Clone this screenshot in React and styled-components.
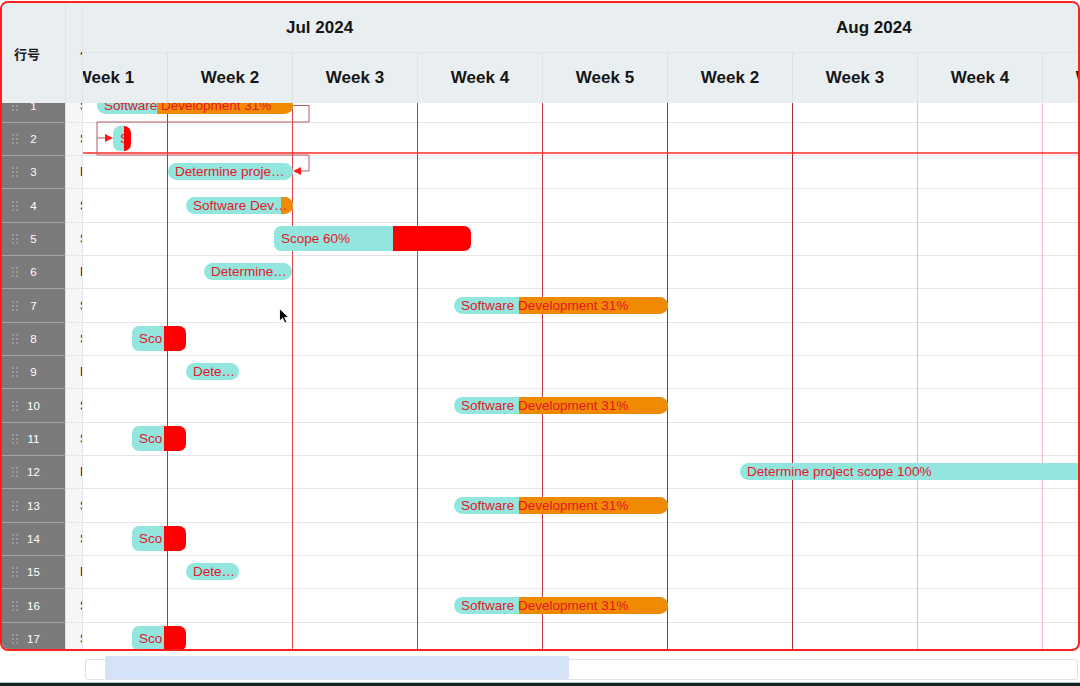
import React from 'react';
import styled, { createGlobalStyle } from 'styled-components';

// page x of the gantt panel's left edge; bars below are given in page x
const GANTT_LEFT = 83;
const TIMELINE_SHIFT = -40;

const weeks = [
  { label: 'Week 1', line: '#b4343c' },
  { label: 'Week 2', line: '#e0434b' },
  { label: 'Week 3', line: '#b8393f' },
  { label: 'Week 4', line: '#bb3a42' },
  { label: 'Week 5', line: '#a8313a' },
  { label: 'Week 2', line: '#a5303a' },
  { label: 'Week 3', line: '#f3b4b8' },
  { label: 'Week 4', line: '#f4bcc0' },
  { label: 'Week 5', line: '#f4bcc0' },
];

const DEV = 'Software Development';
const SCOPE = 'Scope';
const DET = 'Determine project scope';

const dev = (x1, x2, split) => ({ kind: 'dev', x1, x2, split, label: 'Software Development 31%' });
const scope = (x1, x2, split) => ({ kind: 'scope', x1, x2, split, label: 'Scope 60%' });
const plain = (x1, x2) => ({ kind: 'plain', x1, x2, label: 'Determine project scope 100%' });

const rows = [
  { name: DEV, bar: dev(97, 293, 157) },
  { name: SCOPE, bar: scope(113, 131, 124) },
  { name: DET, bar: plain(168, 293) },
  { name: DEV, bar: dev(186, 293, 281) },
  { name: SCOPE, bar: scope(274, 471, 393) },
  { name: DET, bar: plain(204, 292) },
  { name: DEV, bar: dev(454, 668, 519) },
  { name: SCOPE, bar: scope(132, 186, 164) },
  { name: DET, bar: plain(186, 239) },
  { name: DEV, bar: dev(454, 668, 519) },
  { name: SCOPE, bar: scope(132, 186, 164) },
  { name: DET, bar: plain(740, 1200) },
  { name: DEV, bar: dev(454, 668, 519) },
  { name: SCOPE, bar: scope(132, 186, 164) },
  { name: DET, bar: plain(186, 239) },
  { name: DEV, bar: dev(454, 668, 519) },
  { name: SCOPE, bar: scope(132, 186, 164) },
];

const GlobalStyle = createGlobalStyle`
  * { box-sizing: border-box; }
  body {
    margin: 0;
    background: #fff;
    font-family: "Liberation Sans", Arial, "Noto Sans CJK SC", sans-serif;
  }
`;

const Page = styled.div`
  position: relative;
  width: 1080px;
  height: 686px;
  overflow: hidden;
  background: #fff;
  display: flex;
  flex-direction: column;
`;

const Frame = styled.div`
  margin-top: 1px;
  width: 1080px;
  height: 650px;
  border: 2px solid #ff1f1f;
  border-radius: 8px;
  overflow: hidden;
  display: flex;
`;

const TableSide = styled.div`
  width: 81px;
  flex-shrink: 0;
  display: flex;
  flex-direction: column;
  border-right: 1px solid #e2e6ea;
`;

const TableHead = styled.div`
  height: 100px;
  display: flex;
  background: #e9eef1;
`;

const HeadCell = styled.div`
  width: ${p => p.$w}px;
  display: flex;
  align-items: center;
  padding-left: ${p => p.$pad}px;
  font-size: 13px;
  font-weight: ${p => (p.$bold ? 700 : 400)};
  color: #1c1c1c;
  white-space: nowrap;
  overflow: hidden;
  border-right: ${p => (p.$divider ? '1px solid #dde2e6' : 'none')};
`;

const TableBody = styled.div`
  flex: 1;
  overflow: hidden;
`;

const Rows = styled.div`
  margin-top: -13.5px;
`;

const TableRow = styled.div`
  height: 33.33px;
  display: flex;
`;

const IndexCell = styled.div`
  position: relative;
  width: 65px;
  display: flex;
  align-items: center;
  justify-content: center;
  background: #7b7b7b;
  border-bottom: 1px solid #a3a3a3;
  border-right: 1px solid #e0e0e0;
  color: #fff;
  font-size: 11.5px;
`;

const Handle = styled.svg`
  position: absolute;
  left: 9px;
  top: 50%;
  margin-top: -6px;
`;

const NameCell = styled.div`
  width: 16px;
  display: flex;
  align-items: center;
  padding-left: 14px;
  background: #f4f6f8;
  border-bottom: 1px solid #e6e8ea;
  font-size: 12px;
  color: #222;
  white-space: nowrap;
  overflow: hidden;
`;

const GanttSide = styled.div`
  flex: 1;
  min-width: 0;
  display: flex;
  flex-direction: column;
`;

const GanttHead = styled.div`
  height: 100px;
  background: #e9eef1;
  overflow: hidden;
  display: flex;
  flex-direction: column;
`;

const Track = styled.div`
  display: flex;
  margin-left: ${TIMELINE_SHIFT}px;
  height: 100%;
`;

const MonthRow = styled.div`
  height: 49px;
`;

const MonthCell = styled.div`
  width: ${p => p.$w}px;
  flex-shrink: 0;
  display: flex;
  align-items: center;
  padding-left: ${p => p.$pad}px;
  font-size: 17px;
  font-weight: 700;
  color: #151515;
`;

const WeekRow = styled.div`
  height: 51px;
  border-top: 1px solid #dfe4e8;
`;

const WeekCell = styled.div`
  width: 125px;
  flex-shrink: 0;
  display: flex;
  align-items: center;
  justify-content: center;
  border-right: 1px solid #dde2e6;
  font-size: 17px;
  font-weight: 700;
  color: #151515;
  white-space: nowrap;
`;

const GanttBody = styled.div`
  position: relative;
  flex: 1;
  overflow: hidden;
`;

const Grid = styled.div`
  position: absolute;
  inset: 0;
  left: ${TIMELINE_SHIFT}px;
  display: flex;
  pointer-events: none;
  z-index: 1;
`;

const GridColumn = styled.div`
  width: 125px;
  flex-shrink: 0;
  border-right: 1px solid ${p => p.$line};
`;

const GanttRow = styled.div`
  position: relative;
  height: 33.33px;
  border-bottom: 1px solid #e5e5e5;
`;

const Bar = styled.div`
  position: absolute;
  left: ${p => p.$x}px;
  width: ${p => p.$w}px;
  top: ${p => (p.$tall ? 3.3 : 7.2)}px;
  height: ${p => (p.$tall ? 25 : 17)}px;
  line-height: ${p => (p.$tall ? 25 : 17)}px;
  border-radius: ${p => (p.$tall ? 7 : 8.5)}px;
  background: #93e6dd;
  overflow: hidden;
  z-index: 2;
`;

const Fill = styled.div`
  position: absolute;
  top: 0;
  bottom: 0;
  left: ${p => p.$x}px;
  right: 0;
  background: ${p => p.$color};
  z-index: ${p => (p.$over ? 2 : 0)};
`;

const BarLabel = styled.span`
  position: relative;
  z-index: 1;
  display: block;
  padding: 0 3px 0 7px;
  font-size: 13.5px;
  color: #e3152b;
  white-space: nowrap;
  overflow: hidden;
  text-overflow: ellipsis;
`;

const Links = styled.svg`
  position: absolute;
  left: 0;
  top: 0;
  width: 100%;
  height: 100%;
  z-index: 3;
  pointer-events: none;
`;

const ScrollArea = styled.div`
  height: 31px;
  padding: 8px 2px 0 85px;
`;

const ScrollTrack = styled.div`
  position: relative;
  height: 21px;
  border: 1px solid #dfe2e6;
  border-radius: 3px;
  background: #fff;
`;

const ScrollThumb = styled.div`
  position: absolute;
  left: 19px;
  top: -4px;
  width: 464px;
  height: 23px;
  background: #d5e3f8;
  border-radius: 2px;
`;

const BottomEdge = styled.div`
  height: 4px;
  background: #172121;
  border-top: 1px solid #a9c8c8;
`;

const Cursor = styled.svg`
  position: absolute;
  left: 279px;
  top: 308px;
  z-index: 10;
`;

const DragDots = () => (
  <Handle width="8" height="12" viewBox="0 0 8 12">
    {[2, 6, 10].map(y => (
      <g key={y}>
        <circle cx="2" cy={y} r="0.9" fill="#a8a8a8" />
        <circle cx="6" cy={y} r="0.9" fill="#a8a8a8" />
      </g>
    ))}
  </Handle>
);

const TaskBar = ({ bar }) => {
  const x = bar.x1 - GANTT_LEFT;
  const w = bar.x2 - bar.x1;
  const tall = bar.kind === 'scope';
  return (
    <Bar $x={x} $w={w} $tall={tall}>
      {bar.kind === 'dev' && <Fill $x={bar.split - bar.x1} $color="#f08a00" />}
      <BarLabel>{bar.label}</BarLabel>
      {bar.kind === 'scope' && <Fill $x={bar.split - bar.x1} $color="#ff0000" $over />}
    </Bar>
  );
};

const App = () => {
  return (
    <Page>
      <GlobalStyle />
      <Frame>
        <TableSide>
          <TableHead>
            <HeadCell $w={65} $pad={12} $bold $divider>行号</HeadCell>
            <HeadCell $w={16} $pad={14}>任务名称</HeadCell>
          </TableHead>
          <TableBody>
            <Rows>
              {rows.map((r, i) => (
                <TableRow key={i}>
                  <IndexCell>
                    <DragDots />
                    {i + 1}
                  </IndexCell>
                  <NameCell>{r.name}</NameCell>
                </TableRow>
              ))}
            </Rows>
          </TableBody>
        </TableSide>

        <GanttSide>
          <GanttHead>
            <MonthRow>
              <Track>
                <MonthCell $w={625} $pad={243}>Jul 2024</MonthCell>
                <MonthCell $w={500} $pad={168}>Aug 2024</MonthCell>
              </Track>
            </MonthRow>
            <WeekRow>
              <Track>
                {weeks.map((w, i) => (
                  <WeekCell key={i}>{w.label}</WeekCell>
                ))}
              </Track>
            </WeekRow>
          </GanttHead>

          <GanttBody>
            <Grid>
              {weeks.map((w, i) => (
                <GridColumn key={i} $line={w.line} />
              ))}
            </Grid>
            <Rows>
              {rows.map((r, i) => (
                <GanttRow key={i}>
                  <TaskBar bar={r.bar} />
                </GanttRow>
              ))}
            </Rows>
            <Links>
              <path d="M0 50 H1000" stroke="#ff2a2a" strokeWidth="1.5" fill="none" />
              <path d="M210 2.5 H226 V19 H14 V35 H24" stroke="#b85a62" strokeWidth="1" fill="none" />
              <polygon points="22,31 30,35 22,39" fill="#ff1a1a" />
              <path d="M14 35 V52 H226 V68 H216" stroke="#b85a62" strokeWidth="1" fill="none" />
              <polygon points="218,64 210,68 218,72" fill="#ff1a1a" />
            </Links>
          </GanttBody>
        </GanttSide>
      </Frame>

      <ScrollArea>
        <ScrollTrack>
          <ScrollThumb />
        </ScrollTrack>
      </ScrollArea>
      <BottomEdge />

      <Cursor width="11" height="16" viewBox="0 0 11 16">
        <path d="M0.5 0.5 L0.5 13 L3.6 10.2 L5.8 15 L7.8 14.1 L5.7 9.4 L9.8 9.4 Z" fill="#000" stroke="#fff" strokeWidth="0.9" />
      </Cursor>
    </Page>
  );
};

export default App;
